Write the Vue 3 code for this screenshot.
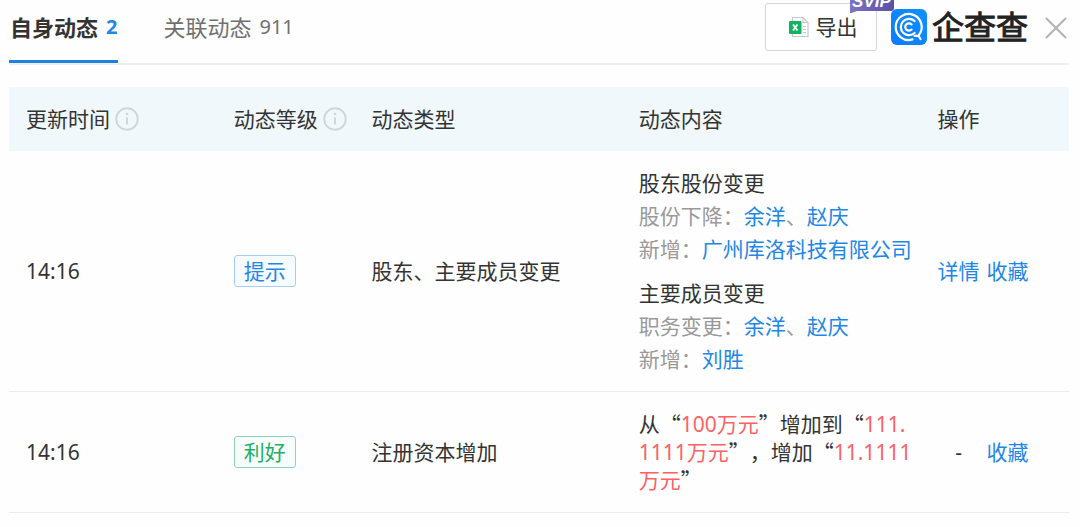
<script setup>
import { ref } from 'vue'

const activeTab = ref('self')
const tabs = [
  { key: 'self', label: '自身动态', count: 2 },
  { key: 'related', label: '关联动态', count: 911 },
]

const columns = [
  { title: '更新时间', info: true, cls: 'c-time' },
  { title: '动态等级', info: true, cls: 'c-level' },
  { title: '动态类型', info: false, cls: 'c-type' },
  { title: '动态内容', info: false, cls: 'c-content' },
  { title: '操作', info: false, cls: 'c-action' },
]

const changes = [
  {
    title: '股东股份变更',
    lines: [
      { label: '股份下降：', names: ['余洋', '赵庆'] },
      { label: '新增：', names: ['广州库洛科技有限公司'] },
    ],
  },
  {
    title: '主要成员变更',
    lines: [
      { label: '职务变更：', names: ['余洋', '赵庆'] },
      { label: '新增：', names: ['刘胜'] },
    ],
  },
]
</script>

<template>
  <main class="panel">
    <header class="top">
      <nav class="tabs">
        <button
          v-for="t in tabs"
          :key="t.key"
          type="button"
          class="tab"
          :class="{ active: activeTab === t.key }"
          @click="activeTab = t.key"
        >
          <span>{{ t.label }}</span><span class="count">{{ t.count }}</span>
        </button>
      </nav>
      <div class="tools">
        <button type="button" class="export">
          <svg class="xls" viewBox="0 0 20 22" aria-hidden="true">
            <path d="M3.500 1.500h10.500l5 5v14H3.500z" fill="#fff" stroke="#c9c9c9" stroke-width="1.2" />
            <path d="M14 1.500v5h5" fill="none" stroke="#c9c9c9" stroke-width="1.2" />
            <path d="M14 10.500h3M14 13.500h3M14 16.500h3" stroke="#c9c9c9" stroke-width="1.2" />
            <rect x="0" y="5" width="12.500" height="13" rx="1" fill="#12b263" />
            <path d="M4 8.500l4.500 6M8.500 8.500l-4.500 6" stroke="#fff" stroke-width="1.8" />
          </svg>
          <span>导出</span>
          <span class="svip">
            <svg viewBox="0 0 45 21" aria-hidden="true">
              <defs>
                <linearGradient id="svipFill" x1="0" x2="1">
                  <stop offset="0" stop-color="#7c74c4" />
                  <stop offset="1" stop-color="#5a50a4" />
                </linearGradient>
              </defs>
              <path d="M4 0h38q3 0 3 3v13q0 3-3 3H8l-7 2.500V3q0-3 3-3z" fill="url(#svipFill)" />
            </svg>
            <span class="svip-text">SVIP</span>
          </span>
        </button>
        <div class="brand">
          <svg class="logo" viewBox="0 0 36 36" aria-hidden="true">
            <defs>
              <linearGradient id="logoFill" x1="0" y1="1" x2="1" y2="0">
                <stop offset="0" stop-color="#0a7cff" />
                <stop offset="1" stop-color="#1190ff" />
              </linearGradient>
            </defs>
            <rect width="36" height="36" rx="6" fill="url(#logoFill)" />
            <g fill="none" stroke="#fff" stroke-width="2.200" stroke-linecap="round">
              <path d="M21.500 30.400A13 13 0 1 1 27.600 26.400" />
              <path d="M23.500 26.800h4L29.500 30" />
              <path d="M23.600 24A8.200 8.200 0 1 1 23.600 12" />
              <path d="M20.600 20.600A3.700 3.700 0 1 1 20.600 15.400" />
            </g>
          </svg>
          <span class="brand-name">企查查</span>
        </div>
        <button type="button" class="close" aria-label="关闭">
          <svg viewBox="0 0 22 22" aria-hidden="true">
            <path d="M1 1l20 20M21 1L1 21" stroke="#b4b4b4" stroke-width="2.200" />
          </svg>
        </button>
      </div>
    </header>

    <table class="grid">
      <thead>
        <tr>
          <th v-for="c in columns" :key="c.title" :class="c.cls" scope="col">
            <span class="head">
              {{ c.title }}
              <svg v-if="c.info" class="info" viewBox="0 0 24 24" aria-hidden="true">
                <circle cx="12" cy="12" r="10.800" fill="none" stroke="#d2d6d9" stroke-width="2" />
                <path d="M12 10.500v7" stroke="#d2d6d9" stroke-width="2" />
                <circle cx="12" cy="7" r="1.300" fill="#d2d6d9" />
              </svg>
            </span>
          </th>
        </tr>
      </thead>
      <tbody>
        <tr>
          <td>14:16</td>
          <td><span class="tag tip">提示</span></td>
          <td>股东、主要成员变更</td>
          <td class="detail">
            <section v-for="g in changes" :key="g.title" class="group">
              <div>{{ g.title }}</div>
              <div v-for="l in g.lines" :key="l.label" class="muted">
                {{ l.label }}<template v-for="(n, i) in l.names" :key="n"><template v-if="i">、</template><a href="#">{{ n }}</a></template>
              </div>
            </section>
          </td>
          <td>
            <div class="actions"><a href="#">详情</a><a href="#">收藏</a></div>
          </td>
        </tr>
        <tr>
          <td>14:16</td>
          <td><span class="tag good">利好</span></td>
          <td>注册资本增加</td>
          <td class="summary">从<span class="q">“</span><em>100万元</em><span class="q">”</span>增加到<span class="q">“</span><em>111.1111万元</em><span class="q">”，</span>增加<span class="q">“</span><em>11.1111万元</em><span class="q">”</span></td>
          <td>
            <div class="actions"><span class="none">-</span><a href="#">收藏</a></div>
          </td>
        </tr>
      </tbody>
    </table>
  </main>
</template>

<style>
body {
  margin: 0;
  background: #fefefe;
}
</style>

<style scoped>
.panel {
  padding: 0 11px 0 9px;
  color: #333;
  font: 21px/28px "Noto Sans", "Noto Sans CJK SC", sans-serif;
}
button {
  margin: 0;
  padding: 0;
  border: 0;
  background: none;
  color: inherit;
  font: inherit;
  cursor: pointer;
}
a {
  color: #1f87e6;
  text-decoration: none;
}
.top {
  display: flex;
  justify-content: space-between;
  height: 63px;
  border-bottom: 2px solid #eee;
}
.tabs {
  display: flex;
  gap: 44px;
}
.tab {
  display: flex;
  align-items: center;
  gap: 8px;
  height: 63px;
  padding: 0 1px 9px;
  box-sizing: border-box;
  color: #707070;
  font-size: 22px;
  white-space: nowrap;
}
.count {
  font-size: 20px;
}
.tab.active {
  padding-bottom: 6px;
  border-bottom: 3px solid #1f80de;
  color: #333;
  font-weight: 700;
}
.active .count {
  color: #1f87e6;
}
.tools {
  display: flex;
  align-items: flex-start;
}
.export {
  position: relative;
  display: flex;
  align-items: center;
  justify-content: center;
  gap: 6px;
  width: 112px;
  height: 48px;
  margin-top: 3px;
  padding-left: 5px;
  border: 1px solid #d6d6d6;
  border-radius: 3px;
  background: #fff;
  box-sizing: border-box;
}
.xls {
  width: 20px;
  height: 22px;
}
.svip {
  position: absolute;
  top: -12px;
  right: -18px;
  width: 45px;
  height: 21px;
}
.svip svg {
  display: block;
  width: 45px;
  height: 21px;
}
.svip-text {
  position: absolute;
  inset: 0;
  color: #fff;
  font: italic 700 17px/20px "Liberation Sans", sans-serif;
  text-align: center;
}
.brand {
  display: flex;
  align-items: flex-start;
  gap: 5px;
  height: 36px;
  margin: 9px 0 0 14px;
}
.logo {
  width: 36px;
  height: 36px;
}
.brand-name {
  color: #222;
  font: 400 32px/32px "Noto Sans CJK SC", sans-serif;
  -webkit-text-stroke: 1px #222;
}
.close {
  width: 22px;
  height: 22px;
  margin: 17px 2px 0 17px;
}
.close svg {
  display: block;
  width: 22px;
  height: 22px;
}
.grid {
  width: 100%;
  margin-top: 22px;
  border-collapse: separate;
  border-spacing: 0;
  table-layout: fixed;
}
.c-time { width: 19.6%; }
.c-level { width: 13%; }
.c-type { width: 25.2%; }
.c-content { width: 28.2%; }
.c-action { width: 14%; }
th {
  height: 64px;
  padding: 0 6px 0 17px;
  box-sizing: border-box;
  background: #f0f8fc;
  font-weight: 400;
  text-align: left;
}
.head {
  display: flex;
  align-items: center;
  gap: 5px;
  white-space: nowrap;
}
.info {
  flex: none;
  width: 24px;
  height: 24px;
}
td {
  padding: 18px 6px 18px 17px;
  border-bottom: 1px solid #ececec;
  vertical-align: middle;
}
.tag {
  display: inline-block;
  padding: 1px 9px;
  border: 1px solid;
  border-radius: 3px;
}
.tip {
  border-color: #a4cef5;
  background: #f6fbff;
  color: #1f87e6;
}
.good {
  border-color: #8ed6b3;
  background: #f7fdfa;
  color: #1fae66;
}
.detail {
  padding-top: 16px;
  padding-bottom: 15px;
  line-height: 33px;
}
.group + .group {
  margin-top: 11px;
}
.muted {
  color: #999;
}
.summary {
  word-break: break-all;
  line-break: anywhere;
  text-spacing-trim: space-all;
}
.summary em {
  color: #fb6165;
  font-style: normal;
}
.q {
  font-family: "Noto Sans CJK SC", sans-serif;
  line-height: 20px;
}
.actions {
  display: flex;
  gap: 7px;
  white-space: nowrap;
}
.none {
  width: 42px;
  text-align: center;
}
</style>
